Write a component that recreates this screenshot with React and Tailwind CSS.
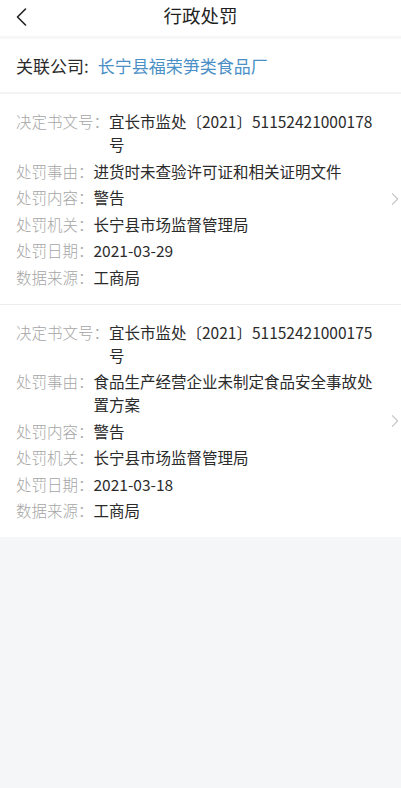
import React from 'react';

const FONT = { fontFamily: '"PingFang SC", "Noto Sans CJK SC", "Noto Sans", sans-serif' };

const records = [
    {
        id: 1,
        rows: [
            ['决定书文号：', '宜长市监处〔2021〕51152421000178号'],
            ['处罚事由：', '进货时未查验许可证和相关证明文件'],
            ['处罚内容：', '警告'],
            ['处罚机关：', '长宁县市场监督管理局'],
            ['处罚日期：', '2021-03-29'],
            ['数据来源：', '工商局'],
        ],
    },
    {
        id: 2,
        rows: [
            ['决定书文号：', '宜长市监处〔2021〕51152421000175号'],
            ['处罚事由：', '食品生产经营企业未制定食品安全事故处置方案'],
            ['处罚内容：', '警告'],
            ['处罚机关：', '长宁县市场监督管理局'],
            ['处罚日期：', '2021-03-18'],
            ['数据来源：', '工商局'],
        ],
    },
];

const Chevron = ({ dir = 'right', className = '' }) => (
    <svg viewBox="0 0 12 20" className={className} fill="none" stroke="currentColor" strokeWidth="1.6" strokeLinecap="round" strokeLinejoin="round">
        {dir === 'right' ? <path d="M2 2l8 8-8 8" /> : <path d="M10 2L2 10l8 8" />}
    </svg>
);

const RecordCard = ({ rows, last }) => (
    <div className={`relative pl-4 pr-[23px] pt-[16px] pb-[15px] ${last ? '' : 'border-b border-[#ececec]'}`}>
        <div className="flex flex-col gap-[3.5px]">
            {rows.map(([label, value]) => (
                <div key={label} className="flex text-[15.5px] leading-[23px]">
                    <span className="shrink-0 text-[#a6a6a6] font-light">{label}</span>
                    <span className="flex-1 text-[#2b2b2b] break-all">{value}</span>
                </div>
            ))}
        </div>
        <Chevron className="absolute right-[2px] top-1/2 -translate-y-1/2 w-[8px] h-[15px] text-[#c4c4c4]" />
    </div>
);

export default function App() {
    return (
        <div className="min-h-[788px] bg-[#f4f6f8] flex flex-col" style={FONT}>
            <div className="bg-white">
                {/* header */}
                <div className="relative h-[39px] flex items-center justify-center border-b-[3px] border-[#f7f7f7]">
                    <Chevron dir="left" className="absolute left-[15px] top-[7px] w-[13px] h-[20px] text-[#222]" />
                    <h1 className="text-[18.5px] font-normal text-[#1f1f1f] -mt-1">行政处罚</h1>
                </div>

                {/* company */}
                <div className="h-[55px] flex items-center px-4 text-[17px] border-b-[2px] border-[#f3f3f3]">
                    <span className="text-[#2a2a2a]">关联公司:</span>
                    <span className="ml-[9px] text-[#4a8fc6]">长宁县福荣笋类食品厂</span>
                </div>

                {records.map((r, i) => (
                    <RecordCard key={r.id} rows={r.rows} last={i === records.length - 1} />
                ))}
            </div>
        </div>
    );
}
